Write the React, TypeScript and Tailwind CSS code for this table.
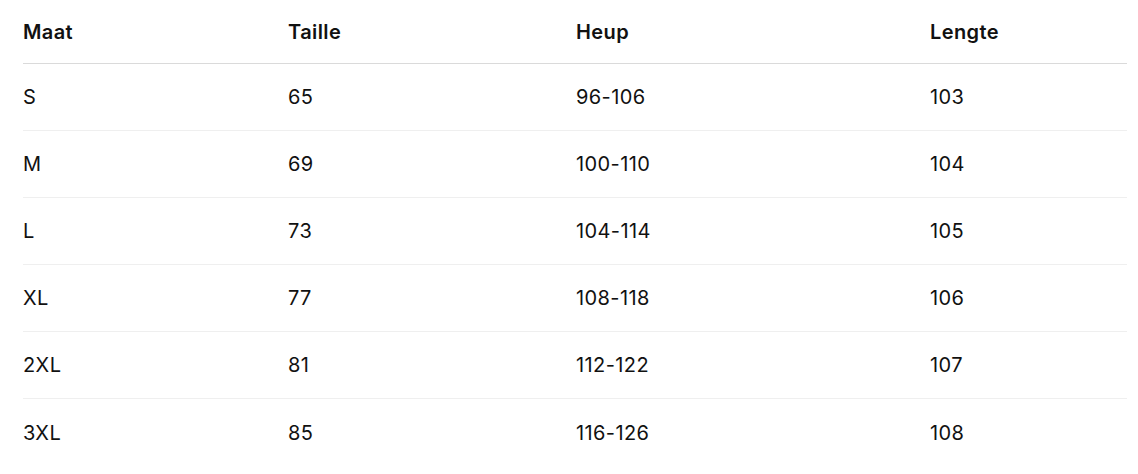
import React from "react";

const rows = [
  ["S", "65", "96-106", "103"],
  ["M", "69", "100-110", "104"],
  ["L", "73", "104-114", "105"],
  ["XL", "77", "108-118", "106"],
  ["2XL", "81", "112-122", "107"],
  ["3XL", "85", "116-126", "108"],
];

export default function App() {
  return (
    <div className="bg-white w-[1138px] h-[474px] pl-[23px] pr-[11px] text-[#111] tracking-[0.025em]" style={{ fontFamily: "Inter, 'Noto Sans', sans-serif" }}>
      <div className="grid grid-cols-[265px_288px_354px_1fr] h-[64px] items-center border-b border-[#dadada] text-[20px] font-semibold">
        <div>Maat</div>
        <div>Taille</div>
        <div>Heup</div>
        <div>Lengte</div>
      </div>
      {rows.map((r, i) => (
        <div
          key={i}
          className={`grid grid-cols-[265px_288px_354px_1fr] h-[67px] items-center text-[20px] ${i < rows.length - 1 ? "border-b border-[#efefef]" : ""}`}
        >
          {r.map((c, j) => (
            <div key={j}>{c}</div>
          ))}
        </div>
      ))}
    </div>
  );
}
